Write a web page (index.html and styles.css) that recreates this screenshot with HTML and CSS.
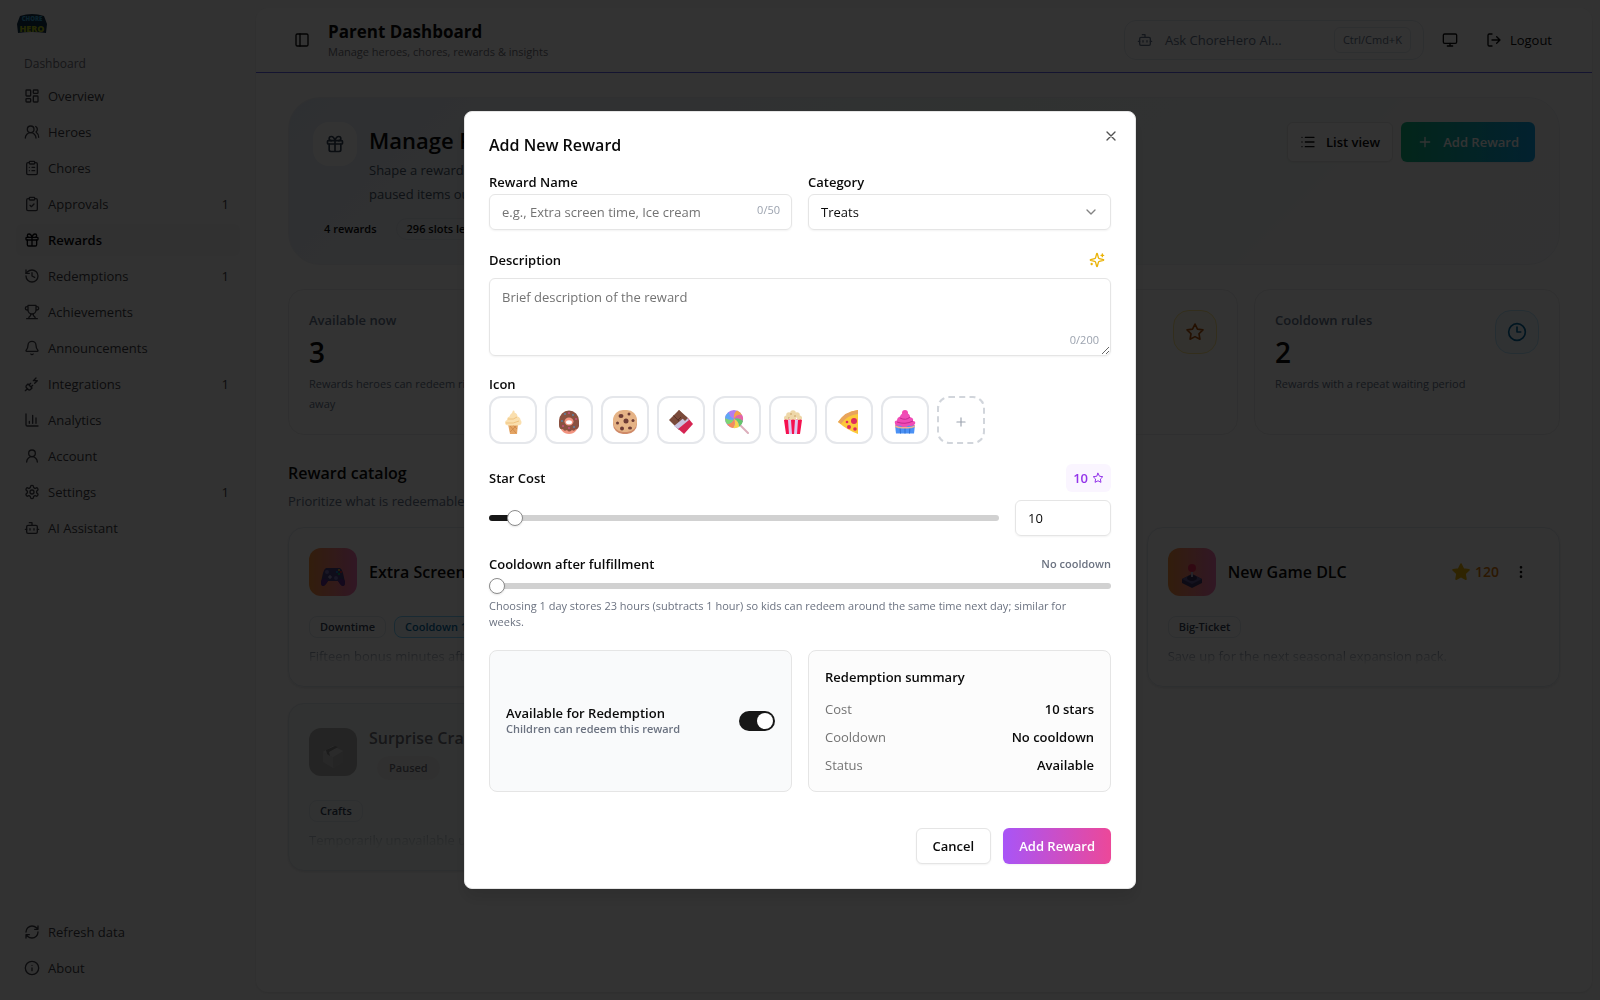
FILE: index.html
```html
<!DOCTYPE html>
<html lang="en">
  <head>
    <meta charset="UTF-8" />
    <meta name="viewport" content="width=device-width, initial-scale=1.0" />
    <title>ChoreHero - Rewards</title>
    <link rel="stylesheet" href="styles.css">
  </head>
  <body>
    <!-- icon sprite -->
    <svg class="sprite" aria-hidden="true">
      <symbol id="i-dashboard" viewBox="0 0 24 24"><rect x="3" y="3" width="7" height="9" rx="1"/><rect x="14" y="3" width="7" height="5" rx="1"/><rect x="14" y="12" width="7" height="9" rx="1"/><rect x="3" y="16" width="7" height="5" rx="1"/></symbol>
      <symbol id="i-users" viewBox="0 0 24 24"><path d="M18 21a8 8 0 0 0-16 0"/><circle cx="10" cy="8" r="5"/><path d="M22 20c0-3.37-2-6.5-4-8a5 5 0 0 0-.45-8.3"/></symbol>
      <symbol id="i-clipboard" viewBox="0 0 24 24"><rect x="8" y="2" width="8" height="4" rx="1"/><path d="M16 4h2a2 2 0 0 1 2 2v14a2 2 0 0 1-2 2H6a2 2 0 0 1-2-2V6a2 2 0 0 1 2-2h2M12 11h4M12 16h4M8 11h.01M8 16h.01"/></symbol>
      <symbol id="i-check" viewBox="0 0 24 24"><rect x="8" y="2" width="8" height="4" rx="1"/><path d="M16 4h2a2 2 0 0 1 2 2v14a2 2 0 0 1-2 2H6a2 2 0 0 1-2-2V6a2 2 0 0 1 2-2h2M9 14l2 2 4-4"/></symbol>
      <symbol id="i-gift" viewBox="0 0 24 24"><rect x="3" y="8" width="18" height="4" rx="1"/><path d="M12 8v13M19 12v7a2 2 0 0 1-2 2H7a2 2 0 0 1-2-2v-7M7.500 8a2.500 2.500 0 0 1 0-5A4.800 8 0 0 1 12 8a4.800 8 0 0 1 4.500-5 2.500 2.500 0 0 1 0 5"/></symbol>
      <symbol id="i-history" viewBox="0 0 24 24"><path d="M3 12a9 9 0 1 0 9-9 9.750 9.750 0 0 0-6.740 2.740L3 8"/><path d="M3 3v5h5M12 7v5l4 2"/></symbol>
      <symbol id="i-trophy" viewBox="0 0 24 24"><path d="M6 9H4.500a2.500 2.500 0 0 1 0-5H6M18 9h1.500a2.500 2.500 0 0 0 0-5H18M4 22h16M10 14.660V17c0 .55-.47.98-.97 1.210C7.850 18.750 7 20.240 7 22M14 14.660V17c0 .55.47.98.97 1.210C16.150 18.750 17 20.240 17 22M18 2H6v7a6 6 0 0 0 12 0V2Z"/></symbol>
      <symbol id="i-bell" viewBox="0 0 24 24"><path d="M10.268 21a2 2 0 0 0 3.464 0M3.262 15.326A1 1 0 0 0 4 17h16a1 1 0 0 0 .74-1.673C19.410 13.956 18 12.499 18 8A6 6 0 0 0 6 8c0 4.499-1.411 5.956-2.738 7.326"/></symbol>
      <symbol id="i-plug" viewBox="0 0 24 24"><path d="M6.300 20.300a2.400 2.400 0 0 0 3.400 0L12 18l-6-6-2.300 2.300a2.400 2.400 0 0 0 0 3.400ZM2 22l3-3M7.500 13.500 10 11M10.500 16.500 13 14M18 3l-4 4h6l-4 4"/></symbol>
      <symbol id="i-chart" viewBox="0 0 24 24"><path d="M3 3v16a2 2 0 0 0 2 2h16M18 17V9M13 17V5M8 17v-3"/></symbol>
      <symbol id="i-user" viewBox="0 0 24 24"><circle cx="12" cy="8" r="5"/><path d="M20 21a8 8 0 0 0-16 0"/></symbol>
      <symbol id="i-settings" viewBox="0 0 24 24"><path d="M12.220 2h-.44a2 2 0 0 0-2 2v.18a2 2 0 0 1-1 1.730l-.43.25a2 2 0 0 1-2 0l-.15-.08a2 2 0 0 0-2.730.73l-.22.38a2 2 0 0 0 .73 2.730l.15.1a2 2 0 0 1 1 1.720v.51a2 2 0 0 1-1 1.740l-.15.09a2 2 0 0 0-.73 2.730l.22.38a2 2 0 0 0 2.730.73l.15-.08a2 2 0 0 1 2 0l.43.25a2 2 0 0 1 1 1.730V20a2 2 0 0 0 2 2h.44a2 2 0 0 0 2-2v-.18a2 2 0 0 1 1-1.730l.43-.25a2 2 0 0 1 2 0l.15.08a2 2 0 0 0 2.730-.73l.22-.39a2 2 0 0 0-.73-2.730l-.15-.08a2 2 0 0 1-1-1.740v-.5a2 2 0 0 1 1-1.740l.15-.09a2 2 0 0 0 .73-2.730l-.22-.38a2 2 0 0 0-2.730-.73l-.15.08a2 2 0 0 1-2 0l-.43-.25a2 2 0 0 1-1-1.730V4a2 2 0 0 0-2-2z"/><circle cx="12" cy="12" r="3"/></symbol>
      <symbol id="i-bot" viewBox="0 0 24 24"><path d="M12 8V4H8"/><rect x="4" y="8" width="16" height="12" rx="2"/><path d="M2 14h2M20 14h2M15 13v2M9 13v2"/></symbol>
      <symbol id="i-refresh" viewBox="0 0 24 24"><path d="M3 12a9 9 0 0 1 9-9 9.750 9.750 0 0 1 6.740 2.740L21 8M21 3v5h-5M21 12a9 9 0 0 1-9 9 9.750 9.750 0 0 1-6.740-2.740L3 16M8 16H3v5"/></symbol>
      <symbol id="i-info" viewBox="0 0 24 24"><circle cx="12" cy="12" r="10"/><path d="M12 16v-4M12 8h.01"/></symbol>
      <symbol id="i-panel" viewBox="0 0 24 24"><rect x="3" y="3" width="18" height="18" rx="2"/><path d="M9 3v18"/></symbol>
      <symbol id="i-monitor" viewBox="0 0 24 24"><rect x="2" y="3" width="20" height="14" rx="2"/><path d="M8 21h8M12 17v4"/></symbol>
      <symbol id="i-logout" viewBox="0 0 24 24"><path d="M9 21H5a2 2 0 0 1-2-2V5a2 2 0 0 1 2-2h4M16 17l5-5-5-5M21 12H9"/></symbol>
      <symbol id="i-list" viewBox="0 0 24 24"><path d="M8 5h13M8 12h13M8 19h13M3 5h.01M3 12h.01M3 19h.01"/></symbol>
      <symbol id="i-plus" viewBox="0 0 24 24"><path d="M5 12h14M12 5v14"/></symbol>
      <symbol id="i-star" viewBox="0 0 24 24"><path d="M12 2.500l2.950 5.980 6.600.96-4.780 4.650 1.130 6.570L12 17.560l-5.900 3.100 1.130-6.570-4.780-4.650 6.600-.96z"/></symbol>
      <symbol id="i-clock" viewBox="0 0 24 24"><circle cx="12" cy="12" r="10"/><path d="M12 6v6h4.500"/></symbol>
      <symbol id="i-dots" viewBox="0 0 24 24"><circle cx="12" cy="5" r="1"/><circle cx="12" cy="12" r="1"/><circle cx="12" cy="19" r="1"/></symbol>
      <symbol id="i-close" viewBox="0 0 24 24"><path d="M18 6 6 18M6 6l12 12"/></symbol>
      <symbol id="i-chevron" viewBox="0 0 24 24"><path d="m6 9 6 6 6-6"/></symbol>
      <symbol id="i-sparkles" viewBox="0 0 24 24"><path d="M9.937 15.500A2 2 0 0 0 8.500 14.063l-6.135-1.582a.5.5 0 0 1 0-.962L8.500 9.936A2 2 0 0 0 9.937 8.500l1.582-6.135a.5.5 0 0 1 .963 0L14.063 8.500A2 2 0 0 0 15.500 9.937l6.135 1.581a.5.5 0 0 1 0 .964L15.500 14.063a2 2 0 0 0-1.437 1.437l-1.582 6.135a.5.5 0 0 1-.963 0zM20 3v4M22 5h-4M4 17v2M5 18H3"/></symbol>
    </svg>

    <div class="app">
      <aside class="sidebar">
        <svg class="logo" viewBox="0 0 32 20" role="img" aria-label="Chore Hero">
          <path d="M4 2Q16-2 28 2L31 10 30 19Q16 17 2 19L1 10Z" fill="#12324a"/>
          <text x="16" y="7" text-anchor="middle" font-size="6" fill="#38a8dc">CHORE</text>
          <text x="16" y="18" text-anchor="middle" font-size="9" fill="#b8cc18">HERO</text>
        </svg>
        <h2 class="nav-label">Dashboard</h2>
        <nav class="nav">
          <a href="#"><svg class="icon"><use href="#i-dashboard"/></svg>Overview</a>
          <a href="#"><svg class="icon"><use href="#i-users"/></svg>Heroes</a>
          <a href="#"><svg class="icon"><use href="#i-clipboard"/></svg>Chores</a>
          <a href="#"><svg class="icon"><use href="#i-check"/></svg>Approvals<span class="count">1</span></a>
          <a href="#" class="active"><svg class="icon"><use href="#i-gift"/></svg>Rewards</a>
          <a href="#"><svg class="icon"><use href="#i-history"/></svg>Redemptions<span class="count">1</span></a>
          <a href="#"><svg class="icon"><use href="#i-trophy"/></svg>Achievements</a>
          <a href="#"><svg class="icon"><use href="#i-bell"/></svg>Announcements</a>
          <a href="#"><svg class="icon"><use href="#i-plug"/></svg>Integrations<span class="count">1</span></a>
          <a href="#"><svg class="icon"><use href="#i-chart"/></svg>Analytics</a>
          <a href="#"><svg class="icon"><use href="#i-user"/></svg>Account</a>
          <a href="#"><svg class="icon"><use href="#i-settings"/></svg>Settings<span class="count">1</span></a>
          <a href="#"><svg class="icon"><use href="#i-bot"/></svg>AI Assistant</a>
        </nav>
        <nav class="nav nav-bottom">
          <a href="#"><svg class="icon"><use href="#i-refresh"/></svg>Refresh data</a>
          <a href="#"><svg class="icon"><use href="#i-info"/></svg>About</a>
        </nav>
      </aside>

      <main class="inset">
        <header class="topbar">
          <button class="icon-btn" aria-label="Toggle sidebar"><svg class="icon"><use href="#i-panel"/></svg></button>
          <div class="topbar-title">
            <h1>Parent Dashboard</h1>
            <p>Manage heroes, chores, rewards &amp; insights</p>
          </div>
          <button class="ask"><svg class="icon"><use href="#i-bot"/></svg>Ask ChoreHero AI...<kbd>Ctrl/Cmd+K</kbd></button>
          <button class="icon-btn" aria-label="Theme"><svg class="icon"><use href="#i-monitor"/></svg></button>
          <button class="logout"><svg class="icon"><use href="#i-logout"/></svg>Logout</button>
        </header>

        <div class="content">
          <section class="hero">
            <div class="hero-top">
              <div class="hero-icon"><svg class="icon"><use href="#i-gift"/></svg></div>
              <div class="hero-text">
                <h2>Manage Rewards</h2>
                <p>Shape a reward library heroes want to save for, tune the star costs, and keep paused items out of the way.</p>
              </div>
              <button class="btn btn-tall"><svg class="icon"><use href="#i-list"/></svg>List view</button>
              <button class="btn btn-tall btn-green"><svg class="icon"><use href="#i-plus"/></svg>Add Reward</button>
            </div>
            <div class="chips">
              <span class="chip chip-plain">4 rewards</span>
              <span class="chip">296 slots left</span>
            </div>
          </section>

          <section class="stats">
            <div class="stat">
              <div><h3>Available now</h3><strong>3</strong><p>Rewards heroes can redeem right away</p></div>
              <span class="stat-icon"><svg class="icon"><use href="#i-gift"/></svg></span>
            </div>
            <div class="stat">
              <div><h3>Paused</h3><strong>1</strong><p>Hidden from heroes</p></div>
              <span class="stat-icon"><svg class="icon"><use href="#i-history"/></svg></span>
            </div>
            <div class="stat">
              <div><h3>Average cost</h3><strong>60</strong><p>Stars per reward</p></div>
              <span class="stat-icon amber"><svg class="icon"><use href="#i-star"/></svg></span>
            </div>
            <div class="stat">
              <div><h3>Cooldown rules</h3><strong>2</strong><p>Rewards with a repeat waiting period</p></div>
              <span class="stat-icon sky"><svg class="icon"><use href="#i-clock"/></svg></span>
            </div>
          </section>

          <section class="catalog">
            <h2>Reward catalog</h2>
            <p>Prioritize what is redeemable today.</p>
            <div class="cards">
              <article class="card">
                <div class="card-head">
                  <span class="tile">
                    <svg viewBox="0 0 24 24"><path d="M5 4h14q2 1 3 5l2 9q0 4-2 4-2 0-5-5H7q-3 5-5 5-2 0-2-4L2 9q1-4 3-5z" fill="#4a4080"/><path d="M0 18q1-4 5-3l2 2q-3 5-5 5-2 0-2-4zM24 18q-1-4-5-3l-2 2q3 5 5 5 2 0 2-4z" fill="#63308f"/><circle cx="6" cy="8" r="2" fill="#7c74b8"/><circle cx="15" cy="14" r="2" fill="#7c74b8"/><path d="M9 11v4M7 13h4" stroke="#c3bde8"/><circle cx="18" cy="6" r="1" fill="#f9c23c"/><circle cx="20" cy="8" r="1" fill="#f8312f"/><circle cx="18" cy="10" r="1" fill="#00d26a"/><circle cx="16" cy="8" r="1" fill="#00a6ed"/></svg>
                  </span>
                  <h3>Extra Screen Time</h3>
                </div>
                <div class="tags"><span class="tag">Downtime</span><span class="tag tag-sky">Cooldown 1 day</span></div>
                <p class="fade">Fifteen bonus minutes after homework.</p>
              </article>
              <article class="card">
                <div class="card-head"><span class="tile"></span><h3>Movie Night</h3></div>
                <div class="tags"><span class="tag">Family</span></div>
                <p class="fade">Pick the movie.</p>
              </article>
              <article class="card">
                <div class="card-head">
                  <span class="tile">
                    <svg viewBox="0 0 24 24"><path d="M2 15l10-5 10 5v4l-10 5-10-5z" fill="#433b6b"/><path d="M2 15l10-5 10 5-10 5z" fill="#635994"/><ellipse cx="12" cy="14" rx="5" ry="3" fill="#3b2f5c"/><path d="M12 5v8" stroke="#b7b3cf" stroke-width="2"/><circle cx="12" cy="4" r="4" fill="#f4305c"/></svg>
                  </span>
                  <h3>New Game DLC</h3>
                  <span class="price"><svg class="icon filled"><use href="#i-star"/></svg>120</span>
                  <button class="icon-btn" aria-label="More"><svg class="icon"><use href="#i-dots"/></svg></button>
                </div>
                <div class="tags"><span class="tag">Big-Ticket</span></div>
                <p class="fade">Save up for the next seasonal expansion pack.</p>
              </article>
              <article class="card paused">
                <div class="card-head">
                  <span class="tile">
                    <svg viewBox="0 0 24 24"><path d="M2 8l10-6 10 5v11l-10 6-10-6z" fill="#c6c6c6"/><path d="M12 13l10-6v11l-10 6z" fill="#b9b9b9"/><path d="M2 8l10-6 10 5-10 6z" fill="#d2d2d2"/><path d="M5 6l9-4 3 1-9 5 1 4-3-2z" fill="#8a8a8a"/></svg>
                  </span>
                  <div>
                    <h3>Surprise Craft Box</h3>
                    <span class="paused-tag">Paused</span>
                  </div>
                </div>
                <div class="tags"><span class="tag">Crafts</span></div>
                <p class="fade">Temporarily unavailable until restock.</p>
              </article>
            </div>
          </section>
        </div>
      </main>
    </div>

    <div class="overlay">
      <form class="dialog" role="dialog" aria-modal="true" aria-labelledby="dialogTitle">
        <button type="button" class="close" aria-label="Close"><svg class="icon"><use href="#i-close"/></svg></button>
        <h2 id="dialogTitle">Add New Reward</h2>

        <div class="two-col">
          <div class="field">
            <label for="rewardName">Reward Name</label>
            <div class="control">
              <input type="text" id="rewardName" maxlength="50" placeholder="e.g., Extra screen time, Ice cream" />
              <span class="counter">0/50</span>
            </div>
          </div>
          <div class="field">
            <label for="category">Category</label>
            <div class="control">
              <select id="category">
                <option>Treats</option>
                <option>Downtime</option>
                <option>Crafts</option>
                <option>Big-Ticket</option>
              </select>
              <svg class="icon chevron"><use href="#i-chevron"/></svg>
            </div>
          </div>
        </div>

        <div class="field">
          <div class="row desc-row">
            <label for="description">Description</label>
            <button type="button" class="sparkle" aria-label="Suggest description"><svg class="icon"><use href="#i-sparkles"/></svg></button>
          </div>
          <div class="control">
            <textarea id="description" maxlength="200" placeholder="Brief description of the reward"></textarea>
            <span class="counter">0/200</span>
          </div>
        </div>

        <div class="field" role="group" aria-labelledby="iconLabel">
          <span class="label" id="iconLabel">Icon</span>
          <div class="emoji-row">
            <button type="button" aria-label="Ice cream">
              <svg viewBox="0 0 24 24"><path d="M7 14h10l-1 10H9z" fill="#e4a463"/><path d="M9 16l6 7M12 15l4 4M15 16l-6 6" stroke="#c98443" stroke-width=".7"/><path d="M12 .5q2 0 1.500 2 3 1 3 4 3 1 3 3.500 1 .5 1 2.500 0 3-4 3h-9q-3.500 0-3.500-3 0-2 2-2.500 0-3 2.500-3.500Q9 4 11 3z" fill="#fadfae"/><path d="M7 9q6 1 9-2M5 13q8 1 13-2" stroke="#efc27e" fill="none"/></svg>
            </button>
            <button type="button" aria-label="Doughnut">
              <svg viewBox="0 0 24 24"><ellipse cx="12" cy="13" rx="10" ry="11" fill="#f29480"/><path d="M2 11a10 10.500 0 0 1 20 0v5q-1 4-3 3-2 3-4 1-3 3-5 0-3 2-4-1-4 1-4-4z" fill="#8a5140"/><ellipse cx="12" cy="11.500" rx="4.500" ry="4" fill="#f29480"/><ellipse cx="12" cy="12.300" rx="3" ry="2" fill="#fff"/><g fill="#3aa6e8"><circle cx="8" cy="4" r=".8"/><circle cx="16" cy="5" r=".8"/><circle cx="5" cy="11" r=".8"/><circle cx="17" cy="17" r=".8"/></g><g fill="#f04ea8"><circle cx="12" cy="3" r=".8"/><circle cx="19" cy="9" r=".8"/><circle cx="6" cy="16" r=".8"/><circle cx="12" cy="18" r=".8"/></g></svg>
            </button>
            <button type="button" aria-label="Cookie">
              <svg viewBox="0 0 24 24"><rect y="1" width="24" height="23" rx="10" fill="#cf8a68"/><rect width="24" height="22" rx="10" fill="#e5b386"/><g fill="#6d3b35"><ellipse cx="8" cy="6" rx="2.500" ry="2"/><circle cx="16" cy="4" r="1.500"/><circle cx="13" cy="11" r="2.500"/><circle cx="4.500" cy="13" r="1.500"/><circle cx="20" cy="10.500" r="1.500"/><circle cx="9" cy="18.500" r="2"/><ellipse cx="17" cy="18" rx="2" ry="1.500"/></g></svg>
            </button>
            <button type="button" aria-label="Chocolate">
              <svg viewBox="0 0 24 24"><path d="M10 0l9 10L10 20 0 10z" fill="#7b4a3a"/><path d="M4.500 5.500l9.500 10M9 10l5-5" stroke="#563027"/><path d="M19 8l5 6-9 10-8-7z" fill="#d52452"/><path d="M17 6l3 4-11 9-4-3z" fill="#c9c2df"/><path d="M10 0l9 8-3 3-8-8z" fill="#7b4a3a"/></svg>
            </button>
            <button type="button" aria-label="Lollipop">
              <svg viewBox="0 0 24 24"><path d="M14 14l9 9" stroke="#dcaebb" stroke-width="2" stroke-linecap="round"/><circle cx="9" cy="9" r="9" fill="#b47cf0"/><path d="M9 9Q8 3 12 .5A9 9 0 0 1 17 5Q12 4 9 9z" fill="#f4a24b"/><path d="M9 9Q12 4 17 5a9 9 0 0 1 1 6Q14 7 9 9z" fill="#e765a4"/><path d="M9 9q5-2 9 2a9 9 0 0 1-4 6Q14 11 9 9z" fill="#66c46c"/><path d="M9 9q5 2 5 8a9 9 0 0 1-6 1Q11 14 9 9z" fill="#f7d44c"/><path d="M9 9q2 5-1 9a9 9 0 0 1-6-4Q7 14 9 9z" fill="#f58b5a"/><path d="M9 9Q7 14 2 14a9 9 0 0 1-2-6Q5 11 9 9z" fill="#7cd673"/><path d="M9 9Q5 11 0 8a9 9 0 0 1 4-6Q4 7 9 9z" fill="#5fa8f4"/></svg>
            </button>
            <button type="button" aria-label="Popcorn">
              <svg viewBox="0 0 24 24"><g fill="#eed7a8"><circle cx="12" cy="3" r="2.800"/><circle cx="8" cy="5" r="2.800"/><circle cx="16" cy="5" r="2.800"/><circle cx="5.500" cy="8" r="2.500"/><circle cx="18.500" cy="8" r="2.500"/><circle cx="12" cy="8" r="3"/></g><g fill="#b98c4c"><circle cx="10" cy="4" r=".7"/><circle cx="14" cy="6" r=".7"/><circle cx="8" cy="8" r=".7"/></g><path d="M3 10q2-1 3.500 0 2-1 3.500 0 2-1 4 0 2-1 3.500 0 2-1 3.500 0l-2 14H5z" fill="#f5114f"/><path d="M7 10h3l1 14H8zM14 10h3l-1 14h-3z" fill="#dcc9f2"/></svg>
            </button>
            <button type="button" aria-label="Pizza">
              <svg viewBox="0 0 24 24"><path d="M1 12Q8 2 21 0v24Q10 20 1 12z" fill="#fcc93a"/><path d="M1 12Q8 1 21 0v4Q10 5 4 14z" fill="#e9a45c"/><g fill="#df2b5c"><circle cx="17" cy="11" r="3"/><circle cx="12" cy="17" r="2"/><circle cx="18" cy="19" r="1.800"/><circle cx="10" cy="12" r="1.300"/></g></svg>
            </button>
            <button type="button" aria-label="Cupcake">
              <svg viewBox="0 0 24 24"><path d="M2 15h20l-1 8.500H3z" fill="#4a91f5"/><path d="M7 17l.5 6.500M12 17v6.500M17 17l-.5 6.500" stroke="#2f6fd0"/><path d="M2 15q5 3 10 1.500Q18 18 22 15v2q-5 2-10 1.500Q6 19 2 17z" fill="#f4ad8d"/><circle cx="12" cy="3" r="3" fill="#f347b0"/><path d="M12 3q5 0 5 4 4 1 3 4 3 0 2 3-2 3-6 1.500-5 3-9 0-5 1-5-2-1-3 2-3 0-3 3-4Q8 3 12 3z" fill="#f04cb6"/><path d="M7 8q6 3 10-1M4 12q8 3 16-1" stroke="#c42790" fill="none"/></svg>
            </button>
            <button type="button" class="more" aria-label="More icons"><svg class="icon"><use href="#i-plus"/></svg></button>
          </div>
        </div>

        <div class="field">
          <div class="row cost-head">
            <label for="cost">Star Cost</label>
            <span class="cost-badge">10<svg class="icon"><use href="#i-star"/></svg></span>
          </div>
          <div class="row cost-row">
            <input type="range" class="range range-cost" min="1" max="250" value="10" aria-label="Star cost slider" />
            <input type="text" inputmode="numeric" id="cost" value="10" />
          </div>
        </div>

        <div class="field cooldown">
          <div class="row">
            <label for="cooldown">Cooldown after fulfillment</label>
            <span class="hint-strong">No cooldown</span>
          </div>
          <input type="range" class="range" id="cooldown" min="0" max="30" value="0" />
          <p>Choosing 1 day stores 23 hours (subtracts 1 hour) so kids can redeem around the same time next day; similar for weeks.</p>
        </div>

        <div class="two-col">
          <div class="panel panel-toggle">
            <label for="available">Available for Redemption<small>Children can redeem this reward</small></label>
            <input type="checkbox" role="switch" class="switch" id="available" checked />
          </div>
          <div class="panel">
            <h3>Redemption summary</h3>
            <dl>
              <div><dt>Cost</dt><dd>10 stars</dd></div>
              <div><dt>Cooldown</dt><dd>No cooldown</dd></div>
              <div><dt>Status</dt><dd>Available</dd></div>
            </dl>
          </div>
        </div>

        <div class="actions">
          <button type="button" class="btn">Cancel</button>
          <button type="submit" class="btn btn-purple">Add Reward</button>
        </div>
      </form>
    </div>
  </body>
</html>
```

FILE: styles.css
```css
* {
  box-sizing: border-box;
  margin: 0;
  padding: 0;
}
body {
  background-color: #fafafa;
  color: #0a0a0a;
  font-family: "Open Sans", "Noto Sans", sans-serif;
  font-size: 13px;
  line-height: 20px;
}
button,
input,
select,
textarea {
  font: inherit;
  color: inherit;
  background: none;
  border: none;
}
h1,
h2,
h3,
label {
  font-size: 13px;
  font-weight: 600;
}
.sprite {
  position: absolute;
  width: 0;
  height: 0;
}
.icon {
  width: 16px;
  height: 16px;
  flex-shrink: 0;
  fill: none;
  stroke: currentColor;
  stroke-width: 2;
  stroke-linecap: round;
  stroke-linejoin: round;
}
.icon.filled {
  fill: currentColor;
}
.app {
  display: flex;
  height: 100vh;
  overflow: hidden;
}

/* sidebar */
.sidebar {
  width: 256px;
  flex-shrink: 0;
  padding: 14px 16px 16px;
  display: flex;
  flex-direction: column;
  color: #3f3f46;
}
.logo {
  width: 32px;
  height: 20px;
  margin-bottom: 14px;
  font-weight: 800;
}
.nav-label {
  padding: 0 8px;
  font-size: 12px;
  line-height: 32px;
  font-weight: 500;
  color: #71717a;
}
.nav {
  display: flex;
  flex-direction: column;
  gap: 4px;
}
.nav-bottom {
  margin-top: auto;
}
.nav a {
  display: flex;
  align-items: center;
  gap: 8px;
  height: 32px;
  padding: 0 8px;
  border-radius: 6px;
  color: inherit;
  text-decoration: none;
}
.nav a.active {
  background-color: #f4f4f5;
  color: #09090b;
  font-weight: 600;
}
.count {
  margin-left: auto;
  padding-right: 3px;
}

/* main area */
.inset {
  flex: 1;
  min-width: 0;
  margin: 8px 8px 8px 0;
  background-color: #ffffff;
  border-radius: 12px;
  box-shadow: 0 1px 3px rgba(0, 0, 0, 0.1);
  overflow: hidden;
}
.topbar {
  display: flex;
  align-items: center;
  height: 65px;
  padding: 0 24px 0 32px;
  border-bottom: 1px solid #6366f1;
}
.icon-btn {
  width: 28px;
  height: 28px;
  display: flex;
  align-items: center;
  justify-content: center;
}
.topbar-title {
  margin: 0 auto 0 12px;
}
.topbar-title h1 {
  font-size: 17px;
  line-height: 24px;
  font-weight: 700;
}
.topbar-title p {
  font-size: 11px;
  line-height: 16px;
  color: #71717a;
}
.ask {
  display: flex;
  align-items: center;
  gap: 12px;
  width: 300px;
  height: 40px;
  padding: 0 12px;
  margin-right: 12px;
  border: 1px solid #e2e8f0;
  border-radius: 12px;
  color: #64748b;
}
.ask kbd {
  margin-left: auto;
  padding: 0 8px;
  border: 1px solid #e2e8f0;
  border-radius: 6px;
  font-family: inherit;
  font-size: 11px;
  line-height: 24px;
}
.logout {
  display: flex;
  align-items: center;
  gap: 8px;
  height: 40px;
  margin-left: 6px;
  padding: 0 16px;
}
.content {
  padding: 24px 32px;
}
.hero {
  padding: 24px;
  border: 1px solid #eef1f5;
  border-radius: 32px;
  background: linear-gradient(135deg, #e6ecf7 0%, #f1f5f9 20%, #f1f8f6 50%, #f3faf8 75%, #fafafa 80%, #f8fafc 100%);
}
.hero-top {
  display: flex;
  align-items: flex-start;
  gap: 8px;
}
.hero-icon {
  width: 44px;
  height: 44px;
  margin-right: 4px;
  display: flex;
  align-items: center;
  justify-content: center;
  background-color: #ffffff;
  border-radius: 16px;
  color: #334155;
}
.hero-icon .icon,
.stat-icon .icon {
  width: 20px;
  height: 20px;
}
.hero-text {
  flex: 1;
}
.hero-text h2 {
  font-size: 22px;
  line-height: 36px;
}
.hero-text p {
  max-width: 480px;
  line-height: 24px;
  color: #475569;
}
.chips,
.tags {
  display: flex;
  gap: 8px;
}
.chips {
  margin-top: 12px;
}
.chip,
.tag {
  padding: 0 10px;
  border: 1px solid #e2e8f0;
  border-radius: 8px;
  font-size: 11px;
  line-height: 20px;
  font-weight: 600;
}
.chip {
  border-radius: 11px;
}
.chip-plain {
  border-color: transparent;
}
.btn {
  display: flex;
  align-items: center;
  justify-content: center;
  gap: 8px;
  height: 36px;
  padding: 0 16px;
  border: 1px solid #e5e5e5;
  border-radius: 6px;
  background-color: #ffffff;
  box-shadow: 0 1px 2px rgba(0, 0, 0, 0.05);
  font-weight: 600;
  white-space: nowrap;
}
.btn-tall {
  height: 40px;
  padding: 0 12px;
  gap: 10px;
}
.btn-green {
  padding: 0 16px;
  border: none;
  background: linear-gradient(90deg, #10b981, #0ea5e9);
  color: #ffffff;
}
.btn-purple {
  border: none;
  background: linear-gradient(90deg, #a855f7, #ec4899);
  color: #ffffff;
}
.stats {
  display: grid;
  grid-template-columns: repeat(4, 1fr);
  gap: 16px;
  margin-top: 24px;
}
.stat,
.card {
  padding: 20px;
  border: 1px solid #ececee;
  border-radius: 16px;
}
.stat {
  display: flex;
  justify-content: space-between;
  align-items: flex-start;
  min-height: 146px;
}
.stat h3 {
  color: #64748b;
}
.stat strong {
  display: block;
  margin: 4px 0;
  font-size: 28px;
  line-height: 36px;
  font-weight: 600;
}
.stat p {
  font-size: 11px;
  color: #64748b;
}
.stat > div {
  max-width: 200px;
}
.stat-icon {
  width: 44px;
  height: 44px;
  flex-shrink: 0;
  display: flex;
  align-items: center;
  justify-content: center;
  border: 1px solid #e2e8f0;
  border-radius: 16px;
}
.stat-icon.amber {
  color: #b45309;
  background-color: #fffbeb;
  border-color: #fde68a;
}
.stat-icon.sky {
  color: #0369a1;
  background-color: #f0f9ff;
  border-color: #bae6fd;
}
.catalog {
  margin-top: 24px;
}
.catalog > h2 {
  font-size: 16px;
  line-height: 28px;
}
.catalog > p {
  margin-top: 4px;
  color: #64748b;
}
.cards {
  display: grid;
  grid-template-columns: repeat(3, 1fr);
  gap: 16px;
  margin-top: 16px;
}
.card {
  border-color: #e2e8f0;
  box-shadow: 0 1px 3px rgba(0, 0, 0, 0.1);
}
.card-head {
  display: flex;
  align-items: center;
  min-height: 48px;
}
.card-head h3 {
  font-size: 16px;
  line-height: 28px;
}
.tile {
  width: 48px;
  height: 48px;
  margin-right: 12px;
  flex-shrink: 0;
  display: flex;
  align-items: center;
  justify-content: center;
  padding-top: 8px;
  border-radius: 12px;
  background: linear-gradient(90deg, #fb923c, #f472b6);
}
.tile svg {
  width: 24px;
  height: 24px;
}
.price {
  display: flex;
  align-items: center;
  gap: 4px;
  margin-left: auto;
  margin-right: 8px;
  color: #d97706;
  font-size: 14px;
  font-weight: 600;
}
.price .icon {
  width: 20px;
  height: 20px;
  color: #eab308;
}
.tags {
  margin-top: 20px;
}
.tag {
  color: #334155;
}
.tag-sky {
  color: #0369a1;
  background-color: #f0f9ff;
  border-color: #7dd3fc;
}
.fade {
  margin-top: 8px;
  color: #64748b;
  mask-image: linear-gradient(#000000, transparent);
}
.card .icon-btn {
  margin-right: 4px;
}
.paused {
  background-color: #f4faf8;
}
.paused h3,
.paused .paused-tag {
  color: #71717a;
}
.paused .tile {
  background: #b4b4b4;
}
.paused .fade {
  opacity: 0.6;
}
.paused-tag {
  display: inline-block;
  margin: 4px 8px 0;
  padding: 0 12px;
  border-radius: 12px;
  background-color: #f1f1f1;
  font-size: 11px;
  line-height: 24px;
  font-weight: 600;
  vertical-align: top;
}

/* dialog */
.overlay {
  position: fixed;
  inset: 0;
  display: flex;
  align-items: center;
  justify-content: center;
  background-color: rgba(0, 0, 0, 0.8);
}
.dialog {
  position: relative;
  display: flex;
  flex-direction: column;
  gap: 20px;
  width: 100%;
  max-width: 672px;
  padding: 24px;
  border: 1px solid #e5e5e5;
  border-radius: 8px;
  background-color: #ffffff;
  box-shadow: 0 10px 15px rgba(0, 0, 0, 0.1);
}
.dialog > h2 {
  font-size: 16px;
  line-height: 18px;
}
.close {
  position: absolute;
  top: 16px;
  right: 16px;
  width: 16px;
  height: 16px;
  opacity: 0.7;
}
.two-col {
  display: grid;
  grid-template-columns: 1fr 1fr;
  gap: 16px;
}
.field label,
.label {
  display: block;
  margin-bottom: 4px;
  font-weight: 600;
  line-height: 16px;
}
.control {
  position: relative;
}
.control input,
.control select,
.control textarea,
#cost {
  display: block;
  width: 100%;
  height: 36px;
  padding: 4px 12px;
  border: 1px solid #e5e5e5;
  border-radius: 6px;
  box-shadow: 0 1px 2px rgba(0, 0, 0, 0.05);
}
.control select {
  appearance: none;
}
.control textarea {
  height: 78px;
  padding: 8px 12px;
  resize: vertical;
}
::placeholder {
  color: #737373;
}
.counter {
  position: absolute;
  right: 12px;
  bottom: 8px;
  font-size: 11px;
  line-height: 16px;
  color: #9ca3af;
}
.control input + .counter {
  bottom: 12px;
}
.chevron {
  position: absolute;
  top: 10px;
  right: 12px;
  opacity: 0.5;
  pointer-events: none;
}
.row {
  display: flex;
  align-items: center;
  justify-content: space-between;
}
.row label {
  margin-bottom: 0;
}
.desc-row {
  height: 20px;
  margin-bottom: 8px;
}
.sparkle {
  height: 16px;
  padding: 0 6px;
  color: #eab308;
}
.sparkle .icon,
.close .icon {
  display: block;
}
.emoji-row {
  display: flex;
  flex-wrap: wrap;
  gap: 8px;
}
.emoji-row button {
  width: 48px;
  height: 48px;
  padding-top: 4px;
  display: flex;
  align-items: center;
  justify-content: center;
  border: 2px solid #e5e7eb;
  border-radius: 12px;
}
.emoji-row svg {
  width: 24px;
  height: 24px;
}
.emoji-row .more {
  border: 2px dashed #d1d5db;
  color: #9ca3af;
}
.emoji-row .more .icon {
  width: 14px;
  height: 14px;
}
.cost-head {
  margin-bottom: 8px;
}
.cost-badge {
  display: flex;
  align-items: center;
  gap: 4px;
  height: 28px;
  padding: 0 7px;
  border-radius: 6px;
  background-color: #faf5ff;
  color: #9333ea;
  font-weight: 600;
}
.cost-badge .icon {
  width: 12px;
  height: 12px;
}
.cost-row {
  gap: 16px;
}
#cost {
  width: 96px;
}
.range {
  appearance: none;
  display: block;
  width: 100%;
  height: 16px;
}
.range::-webkit-slider-runnable-track {
  height: 6px;
  border-radius: 3px;
  background-color: #d1d1d1;
}
.range-cost::-webkit-slider-runnable-track {
  background: linear-gradient(90deg, #171717 5%, #d1d1d1 5%);
}
.range::-webkit-slider-thumb {
  appearance: none;
  width: 16px;
  height: 16px;
  margin-top: -5px;
  border: 1px solid #8b8b8b;
  border-radius: 50%;
  background-color: #ffffff;
  box-shadow: 0 1px 2px rgba(0, 0, 0, 0.1);
}
.cooldown .row {
  height: 16px;
  margin-bottom: 6px;
}
.hint-strong {
  font-size: 11px;
  font-weight: 600;
  color: #6b7280;
}
.cooldown p {
  margin-top: 4px;
  padding-right: 16px;
  font-size: 11px;
  line-height: 16px;
  color: #6b7280;
}
.panel {
  padding: 16px;
  border: 1px solid #e5e5e5;
  border-radius: 8px;
  background-color: #fcfcfc;
}
.panel-toggle {
  display: flex;
  align-items: center;
  justify-content: space-between;
  background-color: #f9fafb;
}
.panel-toggle label,
.panel-toggle small {
  display: block;
  line-height: 16px;
}
.panel-toggle small {
  font-size: 11px;
  color: #6b7280;
}
.switch {
  appearance: none;
  width: 36px;
  height: 20px;
  padding: 2px;
  border-radius: 10px;
  background-color: #171717;
}
.switch::before {
  content: "";
  display: block;
  width: 16px;
  height: 16px;
  border-radius: 50%;
  background-color: #ffffff;
}
.switch:checked::before {
  margin-left: 16px;
}
.panel dl {
  display: flex;
  flex-direction: column;
  gap: 8px;
  margin-top: 12px;
}
.panel dl div {
  display: flex;
  justify-content: space-between;
}
.panel dt {
  color: #737373;
}
.panel dd {
  font-weight: 600;
}
.actions {
  display: flex;
  justify-content: flex-end;
  gap: 12px;
  margin-top: 16px;
}
```
